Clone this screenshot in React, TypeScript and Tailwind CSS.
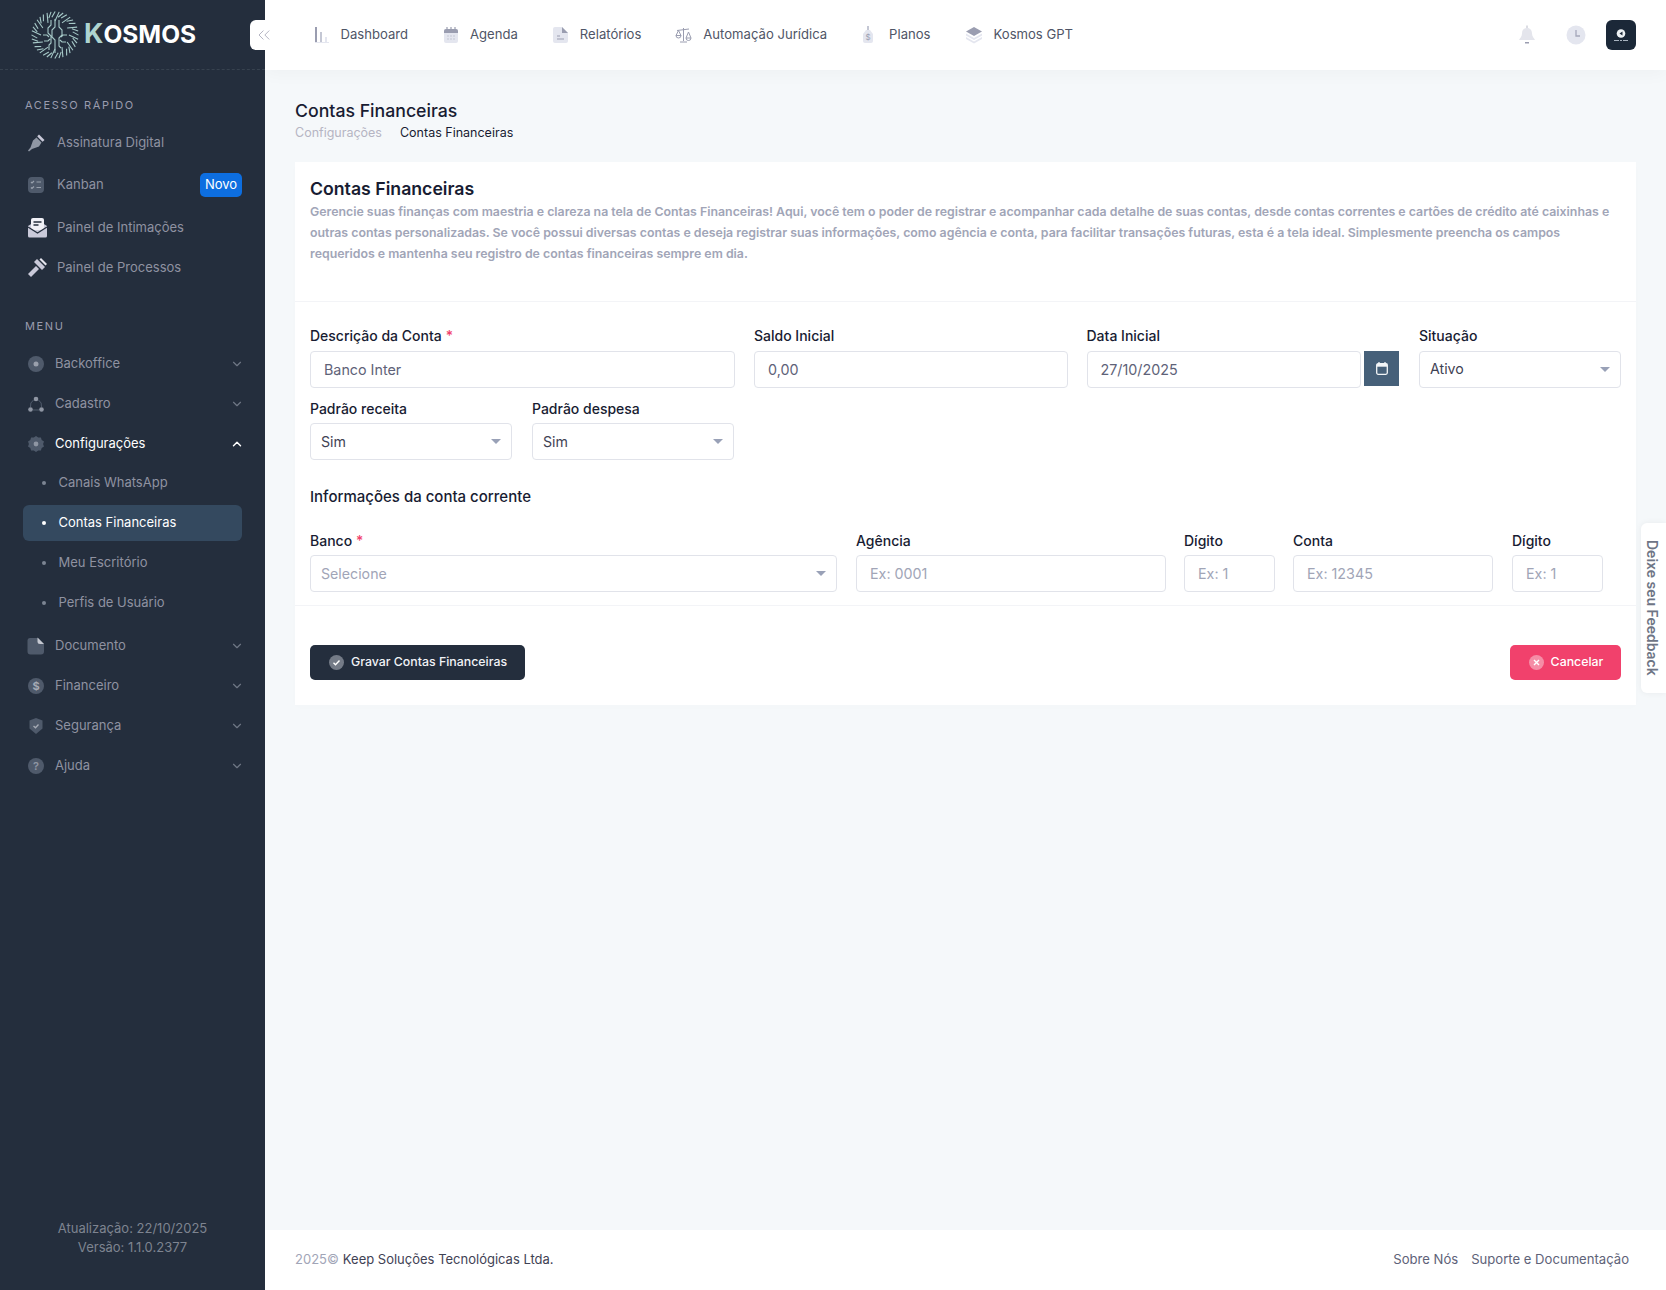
import { ChevronDown, ChevronUp, ChevronsLeft } from "lucide-react";
import type { ReactNode } from "react";

const DUO = "#4f5a6b";
const DUO2 = "#8f96a3";
const QUICK = "#c9c9d9";

function Logo() {
  const ticks = [];
  for (let i = 0; i < 36; i++) {
    const a = (i / 36) * Math.PI * 2;
    const r1 = i % 3 === 0 ? 14 : 18;
    ticks.push(
      <line
        key={i}
        x1={24 + Math.cos(a) * r1}
        y1={24 + Math.sin(a) * r1}
        x2={24 + Math.cos(a + 0.18) * 23.500}
        y2={24 + Math.sin(a + 0.18) * 23.500}
      />,
    );
  }
  return (
    <svg width="48" height="48" viewBox="0 0 48 48" fill="none" stroke="#a6c9c8" strokeWidth="1.100">
      {ticks}
      <path d="M24 8v8l-3 3v7l3 3v13M28 9v7l3 3v5l-3 3v8l2 2M20 9v5l-3 3v5l3 3v7l-2 2v5M12 24h4l2 2M36 24h-4l-2 2M13 30h4l2-2M35 31h-4l-2-2" />
    </svg>
  );
}

function PenIcon() {
  return (
    <svg width="18" height="18" viewBox="0 0 18 18">
      <path d="M9.500 3.500l5 5-2.500 4-7 2.500-3 2.500-1-1 2.500-3 2.500-7z" fill={DUO2} />
      <path d="M11 1.500l1-1 5.500 5.500-1 1-1 .7-5.200-5.200z" fill={QUICK} />
    </svg>
  );
}

function KanbanIcon() {
  return (
    <svg width="18" height="18" viewBox="0 0 18 18">
      <rect x="1" y="1" width="16" height="16" rx="4" fill={DUO} />
      <path d="M4 6l1 1 2-2M4 11.500l1 1 2-2M9.500 6h4.500M9.500 11.500h4.500" stroke="#98a0ac" strokeWidth="1.200" fill="none" />
    </svg>
  );
}

function MailIcon() {
  return (
    <svg width="21" height="21" viewBox="0 0 21 21">
      <path d="M1 9l9.500-6 9.500 6v10a1.500 1.500 0 0 1-1.500 1.500h-16A1.500 1.500 0 0 1 1 19z" fill={QUICK} />
      <rect x="4" y="1" width="13" height="12" rx="2" fill="#f0f0f6" />
      <path d="M6.500 5h8M6.500 8h5" stroke="#242e3d" strokeWidth="1.500" />
      <path d="M1 10l9.500 6 9.500-6" stroke="#242e3d" strokeWidth="1.300" fill="none" />
    </svg>
  );
}

function GavelIcon() {
  return (
    <svg width="21" height="21" viewBox="0 0 21 21">
      <path d="M10 2l8 8-3 3-8-8z" fill={QUICK} />
      <path d="M9 9l3 3-8 8-3-3z" fill={QUICK} />
      <path d="M14 1l6 6-1.500 1.500-6-6z" fill="#e6e6ef" />
    </svg>
  );
}

function MenuIcon({ name }: { name: string }) {
  if (name === "Cadastro")
    return (
      <svg width="18" height="18" viewBox="0 0 18 18">
        <path d="M3.500 12a7 7 0 0 1 3-7M11.500 5a7 7 0 0 1 3 7M6 15h6" stroke={DUO} fill="none" />
        <circle cx="9" cy="4" r="2.300" fill={DUO2} />
        <circle cx="3.500" cy="14.500" r="2.300" fill={DUO2} />
        <circle cx="14.500" cy="14.500" r="2.300" fill={DUO2} />
      </svg>
    );
  if (name === "Configurações")
    return (
      <svg width="18" height="18" viewBox="0 0 18 18">
        <path
          d="M9 1l2.200 1.600 2.700-.2.800 2.600 2.300 1.500-.9 2.500.9 2.500-2.300 1.500-.8 2.600-2.700-.2L9 17l-2.200-1.600-2.700.2-.8-2.600L1 11.500 1.900 9 1 6.500 3.300 5l.8-2.600 2.700.2z"
          fill={DUO}
        />
        <circle cx="9" cy="9" r="2.400" fill={DUO2} />
      </svg>
    );
  if (name === "Documento")
    return (
      <svg width="18" height="18" viewBox="0 0 18 18">
        <path d="M3.500 1H11l6 6v7.500a3 3 0 0 1-3 3H3.500a3 3 0 0 1-3-3v-11a2.500 2.500 0 0 1 3-2.500z" fill={DUO} />
        <path d="M10.500 0.500l6.500 6.500h-4a2.500 2.500 0 0 1-2.500-2.500z" fill="#c6c9d2" />
      </svg>
    );
  if (name === "Financeiro")
    return (
      <svg width="18" height="18" viewBox="0 0 18 18">
        <circle cx="9" cy="9" r="8" fill={DUO} />
        <text x="9" y="13" textAnchor="middle" fontSize="11" fontWeight="700" fill="#a6abb5" fontFamily="Inter, sans-serif">
          $
        </text>
      </svg>
    );
  if (name === "Segurança")
    return (
      <svg width="18" height="18" viewBox="0 0 18 18">
        <path d="M9 1l6.500 2.500v8L9 17l-6.500-5.500v-8z" fill={DUO} />
        <path d="M6.500 9l2 1.800 3-3.300" stroke="#a6abb5" strokeWidth="1.300" fill="none" />
      </svg>
    );
  if (name === "Ajuda")
    return (
      <svg width="18" height="18" viewBox="0 0 18 18">
        <circle cx="9" cy="9" r="8" fill={DUO} />
        <text x="9" y="13" textAnchor="middle" fontSize="11" fontWeight="600" fill="#8f96a3" fontFamily="Inter, sans-serif">
          ?
        </text>
      </svg>
    );
  return (
    <svg width="18" height="18" viewBox="0 0 18 18">
      <circle cx="9" cy="9" r="8" fill={DUO} />
      <circle cx="9" cy="9" r="2.500" fill="#9aa0ac" />
    </svg>
  );
}

function QuickItem({ icon, label, badge, h }: { icon: ReactNode; label: string; badge?: string; h: string }) {
  return (
    <div className={`flex items-center ${h}`}>
      <div className="flex w-[34px] shrink-0 items-center pl-[4px]">{icon}</div>
      <span className="flex-1 text-[13px] text-[#8f92a1]">{label}</span>
      {badge && (
        <span className="flex h-[24px] w-[42px] items-center justify-center rounded-[5px] bg-[#0d6ee0] text-[13px] text-white">
          {badge}
        </span>
      )}
    </div>
  );
}

function MenuItem({ label, open, extra }: { label: string; open?: boolean; extra?: string }) {
  return (
    <div className={`flex items-center ${extra ?? "h-10"}`}>
      <div className="flex w-[32px] shrink-0 items-center pl-[4px]">
        <MenuIcon name={label} />
      </div>
      <span className={`flex-1 text-[13px] ${open ? "text-white" : "text-[#8f92a1]"}`}>{label}</span>
      {open ? (
        <ChevronUp className="mr-[-2px] h-[14px] w-[14px] text-white" strokeWidth={2.500} />
      ) : (
        <ChevronDown className="mr-[-2px] h-[14px] w-[14px] text-[#6f7785]" />
      )}
    </div>
  );
}

function SubItem({ label, active }: { label: string; active?: boolean }) {
  return (
    <div className="flex h-10 items-center">
      <div className={`flex h-[36px] w-full items-center rounded-[6px] ${active ? "bg-[#34495f]" : ""}`}>
        <span className={`ml-[19px] h-[4px] w-[4px] rounded-full ${active ? "bg-white" : "bg-[#7c8593]"}`} />
        <span className={`ml-[12.500px] text-[13px] ${active ? "text-white" : "text-[#8f92a1]"}`}>{label}</span>
      </div>
    </div>
  );
}

function Sidebar() {
  return (
    <aside className="relative z-20 flex h-full w-[265px] shrink-0 flex-col bg-[#242e3d]">
      <div className="flex h-[70px] shrink-0 items-center border-b border-dashed border-[#37424f] pl-[31px]">
        <Logo />
        <span className="ml-[5px] font-['Inter',sans-serif] text-[27px] font-bold text-[#aed4d0]">K</span>
        <span className="font-['Inter',sans-serif] text-[24.500px] font-bold text-white">OSMOS</span>
      </div>
      <div className="absolute left-[250px] top-[20px] flex h-[30px] w-[30px] items-center justify-center rounded-[6px] bg-white pr-[3px]">
        <ChevronsLeft className="h-[20px] w-[20px] text-[#b5b5c3]" strokeWidth={1.200} />
      </div>
      <div className="flex flex-1 flex-col px-[23px] pt-[28px]">
        <div className="pl-[2px] text-[11px] leading-[14px] tracking-[0.15em] text-[#9a9cae]">ACESSO RÁPIDO</div>
        <div className="mt-[10px]">
          <QuickItem icon={<PenIcon />} label="Assinatura Digital" h="h-[42px]" />
          <QuickItem icon={<KanbanIcon />} label="Kanban" badge="Novo" h="h-[42px]" />
          <QuickItem icon={<MailIcon />} label="Painel de Intimações" h="h-[43px]" />
          <QuickItem icon={<GavelIcon />} label="Painel de Processos" h="h-[37px]" />
        </div>
        <div className="mt-[33px] pl-[2px] text-[11px] leading-[14px] tracking-[0.15em] text-[#9a9cae]">MENU</div>
        <div className="mt-[11px]">
          <MenuItem label="Backoffice" />
          <MenuItem label="Cadastro" />
          <MenuItem label="Configurações" open extra="h-[39px]" />
          <SubItem label="Canais WhatsApp" />
          <SubItem label="Contas Financeiras" active />
          <SubItem label="Meu Escritório" />
          <SubItem label="Perfis de Usuário" />
          <MenuItem label="Documento" extra="h-10 mt-[3px]" />
          <MenuItem label="Financeiro" />
          <MenuItem label="Segurança" />
          <MenuItem label="Ajuda" />
        </div>
        <div className="mt-auto pb-[33px] text-center text-[13px] leading-[19px] text-[#7e8490]">
          <div>Atualização: 22/10/2025</div>
          <div>Versão: 1.1.0.2377</div>
        </div>
      </div>
    </aside>
  );
}

function NavIcon({ name }: { name: string }) {
  const a = "#c4c7d4";
  const b = "#e4e6ef";
  const c = "#9a9db0";
  if (name === "Dashboard")
    return (
      <svg width="16" height="18" viewBox="0 0 16 18">
        <rect x="1" y="1" width="2" height="15" fill={c} />
        <rect x="6" y="6" width="2" height="10" fill={a} />
        <rect x="11" y="11" width="2" height="5" fill={b} />
        <rect x="1" y="16" width="14" height="1" fill={b} />
      </svg>
    );
  if (name === "Agenda")
    return (
      <svg width="16" height="18" viewBox="0 0 16 18">
        <rect x="1" y="3" width="14" height="14" rx="2" fill={b} />
        <path d="M1 5a2 2 0 0 1 2-2h10a2 2 0 0 1 2 2v2H1z" fill={c} />
        <path d="M4 1v3M8 1v3M12 1v3" stroke={c} strokeWidth="1.200" />
        <path d="M4 10h2M7 10h2M10 10h2M4 13h2M7 13h2M10 13h2" stroke={a} />
      </svg>
    );
  if (name === "Relatórios")
    return (
      <svg width="17" height="18" viewBox="0 0 17 18">
        <path d="M3 1h7l6 6v8a2 2 0 0 1-2 2H3a2 2 0 0 1-2-2V3a2 2 0 0 1 2-2z" fill={b} />
        <path d="M10 1l6 6h-6z" fill={c} />
        <path d="M5 10h3M5 13h7" stroke={c} />
      </svg>
    );
  if (name === "Automação Jurídica")
    return (
      <svg width="17" height="18" viewBox="0 0 17 18" fill="none" stroke={c} strokeWidth="1">
        <path d="M8.500 2v13M5 16h7M2 4.500l12-1.500" />
        <path d="M3.500 4.500l-2.500 5h5zM13.500 6l-2.500 6h5zM1 9.500a2.500 2.500 0 0 0 5 0M11 12a2.500 2.500 0 0 0 5 0" />
      </svg>
    );
  if (name === "Planos")
    return (
      <svg width="12" height="18" viewBox="0 0 12 18">
        <rect x="5" y="0" width="2" height="5" fill={a} />
        <path d="M4 4h4l3 4v7a2 2 0 0 1-2 2H3a2 2 0 0 1-2-2V8z" fill={b} />
        <text x="6" y="14" textAnchor="middle" fontSize="8" fill={c} fontFamily="Inter, sans-serif">
          $
        </text>
      </svg>
    );
  return (
    <svg width="18" height="18" viewBox="0 0 18 18">
      <path d="M1 11l8 4.500 8-4.500v2l-8 4.500-8-4.500z" fill={b} />
      <path d="M1 7.500l8 4.500 8-4.500v2l-8 4.500-8-4.500z" fill={b} />
      <path d="M9 1l8 4.500-8 4.500-8-4.500z" fill={c} />
    </svg>
  );
}

const navItems = [
  { name: "Dashboard", w: "w-[26.500px]", gap: "ml-0" },
  { name: "Agenda", w: "w-[27px]", gap: "ml-[35px]" },
  { name: "Relatórios", w: "w-[28px]", gap: "ml-[34px]" },
  { name: "Automação Jurídica", w: "w-[28px]", gap: "ml-[34px]" },
  { name: "Planos", w: "w-[27px]", gap: "ml-[35px]" },
  { name: "Kosmos GPT", w: "w-[29px]", gap: "ml-[34px]" },
];

function Topbar() {
  return (
    <header className="relative z-10 flex h-[70px] shrink-0 items-center bg-white pl-[49px] pr-[30px] shadow-[0_4px_16px_rgba(0,0,0,0.03)]">
      {navItems.map((n) => (
        <div key={n.name} className={`flex items-center ${n.gap}`}>
          <div className={`flex ${n.w} items-center`}>
            <NavIcon name={n.name} />
          </div>
          <span className="text-[13.100px] text-[#4f5566]">{n.name}</span>
        </div>
      ))}
      <div className="ml-auto flex items-center">
        <svg width="18" height="20" viewBox="0 0 18 20">
          <path d="M9 0.500v3" stroke="#b8bbc8" />
          <path d="M9 3c3.500 0 5 2.500 5 5.500 0 3 2 4.500 3 6.500H1c1-2 3-3.500 3-6.500C4 5.500 5.500 3 9 3z" fill="#e4e5ec" />
          <path d="M7 17h4v1.500H7z" fill="#9a9db0" />
        </svg>
        <svg className="ml-[30px]" width="20" height="20" viewBox="0 0 20 20">
          <circle cx="10" cy="10" r="9.500" fill="#e4e6ef" />
          <path d="M10 5v6h4" stroke="#a5a8ba" strokeWidth="1.300" fill="none" />
        </svg>
        <div className="ml-[20px] flex h-[30px] w-[30px] flex-col items-center justify-center rounded-[6px] bg-[#1b2838]">
          <svg width="18" height="13" viewBox="0 0 18 13">
            <circle cx="9" cy="4.500" r="4.300" fill="#eef2f5" />
            <path d="M7.500 4.500l3-2v4z" fill="#1b2838" />
            <path d="M2 11.500h5M8 11.500h2M11 11.500h5" stroke="#a8b3bf" strokeWidth="1" />
          </svg>
        </div>
      </div>
    </header>
  );
}

function Label({ text, required }: { text: string; required?: boolean }) {
  return (
    <label className="block text-[14px] font-medium leading-[17px] text-[#181c32]">
      {text}
      {required && <span className="ml-[4px] text-[#f1416c]">*</span>}
    </label>
  );
}

function TextInput({ value, placeholder }: { value?: string; placeholder?: string }) {
  return (
    <input
      readOnly
      value={value}
      placeholder={placeholder}
      className="h-[37px] w-full rounded-[4px] border border-[#e1e3ea] bg-white px-[13px] font-['Inter',sans-serif] text-[14.300px] text-[#5e6278] outline-none placeholder:text-[#a1a5b7]"
    />
  );
}

function Select({ value, muted, lift }: { value: string; muted?: boolean; lift?: boolean }) {
  return (
    <div className={`flex h-[37px] w-full items-center justify-between rounded-[4px] border border-[#e1e3ea] bg-white pl-[10px] pr-[10px] ${lift ? "pb-[1px]" : ""}`}>
      <span className={`text-[14.200px] ${muted ? "text-[#a1a5b7]" : "text-[#3f4254]"}`}>{value}</span>
      <span className="h-0 w-0 border-x-[5px] border-t-[5px] border-x-transparent border-t-[#99a1b7]" />
    </div>
  );
}

function Field({ width, label, required, gap, children }: { width: string; label: string; required?: boolean; gap?: string; children: ReactNode }) {
  return (
    <div className={`${width} shrink-0`}>
      <Label text={label} required={required} />
      <div className={gap ?? "mt-[6px]"}>{children}</div>
    </div>
  );
}

function Card() {
  return (
    <section className="bg-white shadow-[0_2px_8px_rgba(0,0,0,0.01)]">
      <div className="h-[140px] border-b border-[#f3f4f7] px-[15px] pt-[15px]">
        <h2 className="text-[17.700px] font-semibold leading-[24px] text-[#181c32]">Contas Financeiras</h2>
        <p className="text-[12.350px] font-semibold leading-[21px] text-[#a1a5b7]">
          Gerencie suas finanças com maestria e clareza na tela de Contas Financeiras! Aqui, você tem o poder de registrar e acompanhar cada detalhe de suas contas, desde contas correntes e cartões de crédito até caixinhas e outras contas personalizadas. Se você possui diversas contas e deseja registrar suas informações, como agência e conta, para facilitar transações futuras, esta é a tela ideal. Simplesmente preencha os campos requeridos e mantenha seu registro de contas financeiras sempre em dia.
        </p>
      </div>
      <div className="px-[15px] pt-[25px]">
        <div className="flex gap-[19px]">
          <Field width="w-[425px]" label="Descrição da Conta" required gap="mt-[7px]">
            <TextInput value="Banco Inter" />
          </Field>
          <Field width="w-[313.500px]" label="Saldo Inicial" gap="mt-[7px]">
            <TextInput value="0,00" />
          </Field>
          <Field width="w-[313.500px]" label="Data Inicial" gap="mt-[7px]">
            <div className="flex items-start gap-[3px]">
              <TextInput value="27/10/2025" />
              <div className="mr-[1px] flex h-[35px] w-[35px] shrink-0 items-center justify-center bg-[#466079]">
                <svg width="12" height="13" viewBox="0 0 12 13">
                  <path d="M3 0v2M9 0v2" stroke="#f2f5f7" strokeWidth="1.300" />
                  <rect x="0.700" y="1.700" width="10.600" height="10.600" rx="1.500" fill="none" stroke="#f2f5f7" strokeWidth="1.300" />
                  <rect x="0.700" y="1.700" width="10.600" height="3" fill="#f2f5f7" />
                </svg>
              </div>
            </div>
          </Field>
          <Field width="w-[202px]" label="Situação" gap="mt-[7px]">
            <Select value="Ativo" lift />
          </Field>
        </div>
        <div className="mt-[12px] flex gap-[20px]">
          <Field width="w-[202px]" label="Padrão receita">
            <Select value="Sim" />
          </Field>
          <Field width="w-[202px]" label="Padrão despesa">
            <Select value="Sim" />
          </Field>
        </div>
        <h3 className="mt-[27px] text-[15px] font-medium leading-[20px] text-[#181c32]">Informações da conta corrente</h3>
        <div className="mt-[25px] flex gap-[19px]">
          <Field width="w-[527px]" label="Banco" required>
            <Select value="Selecione" muted />
          </Field>
          <Field width="w-[310px]" label="Agência">
            <TextInput placeholder="Ex: 0001" />
          </Field>
          <Field width="w-[91px] ml-[-1px]" label="Dígito">
            <TextInput placeholder="Ex: 1" />
          </Field>
          <Field width="w-[200px] ml-[-1px]" label="Conta">
            <TextInput placeholder="Ex: 12345" />
          </Field>
          <Field width="w-[91px]" label="Dígito">
            <TextInput placeholder="Ex: 1" />
          </Field>
        </div>
      </div>
      <div className="mt-[13px] flex items-center justify-between border-t border-[#f3f4f7] px-[15px] pb-[25px] pt-[39px]">
        <button className="flex h-[35px] w-[215px] items-center justify-center gap-[7px] rounded-[5px] bg-[#242e3d] pl-[1px] text-[12.350px] font-medium text-[#f1f2f6]">
          <svg width="15" height="15" viewBox="0 0 15 15">
            <circle cx="7.500" cy="7.500" r="7.500" fill="#747b87" />
            <path d="M4.500 7.700l2 2 4-4.200" stroke="white" strokeWidth="1.400" fill="none" />
          </svg>
          Gravar Contas Financeiras
        </button>
        <button className="flex h-[35px] w-[111px] items-center justify-center gap-[7px] rounded-[5px] bg-[#f1416c] pl-[1px] text-[12.350px] font-medium text-white">
          <svg width="15" height="15" viewBox="0 0 15 15">
            <circle cx="7.500" cy="7.500" r="7.500" fill="#f58da6" />
            <path d="M5 5l5 5M10 5l-5 5" stroke="white" strokeWidth="1.400" />
          </svg>
          Cancelar
        </button>
      </div>
    </section>
  );
}

export default function App() {
  return (
    <div className="flex h-screen overflow-hidden bg-[#f5f8fa] font-['Inter',sans-serif]">
      <Sidebar />
      <main className="relative flex min-w-0 flex-1 flex-col">
        <Topbar />
        <div className="flex-1 pl-[30px] pr-[30px] pt-[30px]">
          <h1 className="text-[17.700px] font-medium leading-[22px] text-[#181c32]">Contas Financeiras</h1>
          <div className="mt-[1px] flex text-[12.500px] leading-[20px]">
            <span className="text-[#b5b5c3]">Configurações</span>
            <span className="ml-[18px] text-[#181c32]">Contas Financeiras</span>
          </div>
          <div className="mt-[19px]">
            <Card />
          </div>
        </div>
        <footer className="flex h-[60px] shrink-0 items-center justify-between bg-white pl-[30px] pr-[37px] text-[13px]">
          <div>
            <span className="text-[#a1a5b7]">2025©</span>
            <span className="ml-[4px] text-[#3f4254]">Keep Soluções Tecnológicas Ltda.</span>
          </div>
          <div className="flex gap-[13px] text-[13.100px] text-[#5e6278]">
            <span>Sobre Nós</span>
            <span>Suporte e Documentação</span>
          </div>
        </footer>
        <div className="absolute right-0 top-[523px] flex h-[170px] w-[25px] items-center justify-center rounded-l-[6px] bg-white pr-[2px] shadow-[0_0_6px_rgba(0,0,0,0.06)]">
          <span className="text-[14px] font-semibold text-[#6e7585] [writing-mode:vertical-rl]">Deixe seu Feedback</span>
        </div>
      </main>
    </div>
  );
}
